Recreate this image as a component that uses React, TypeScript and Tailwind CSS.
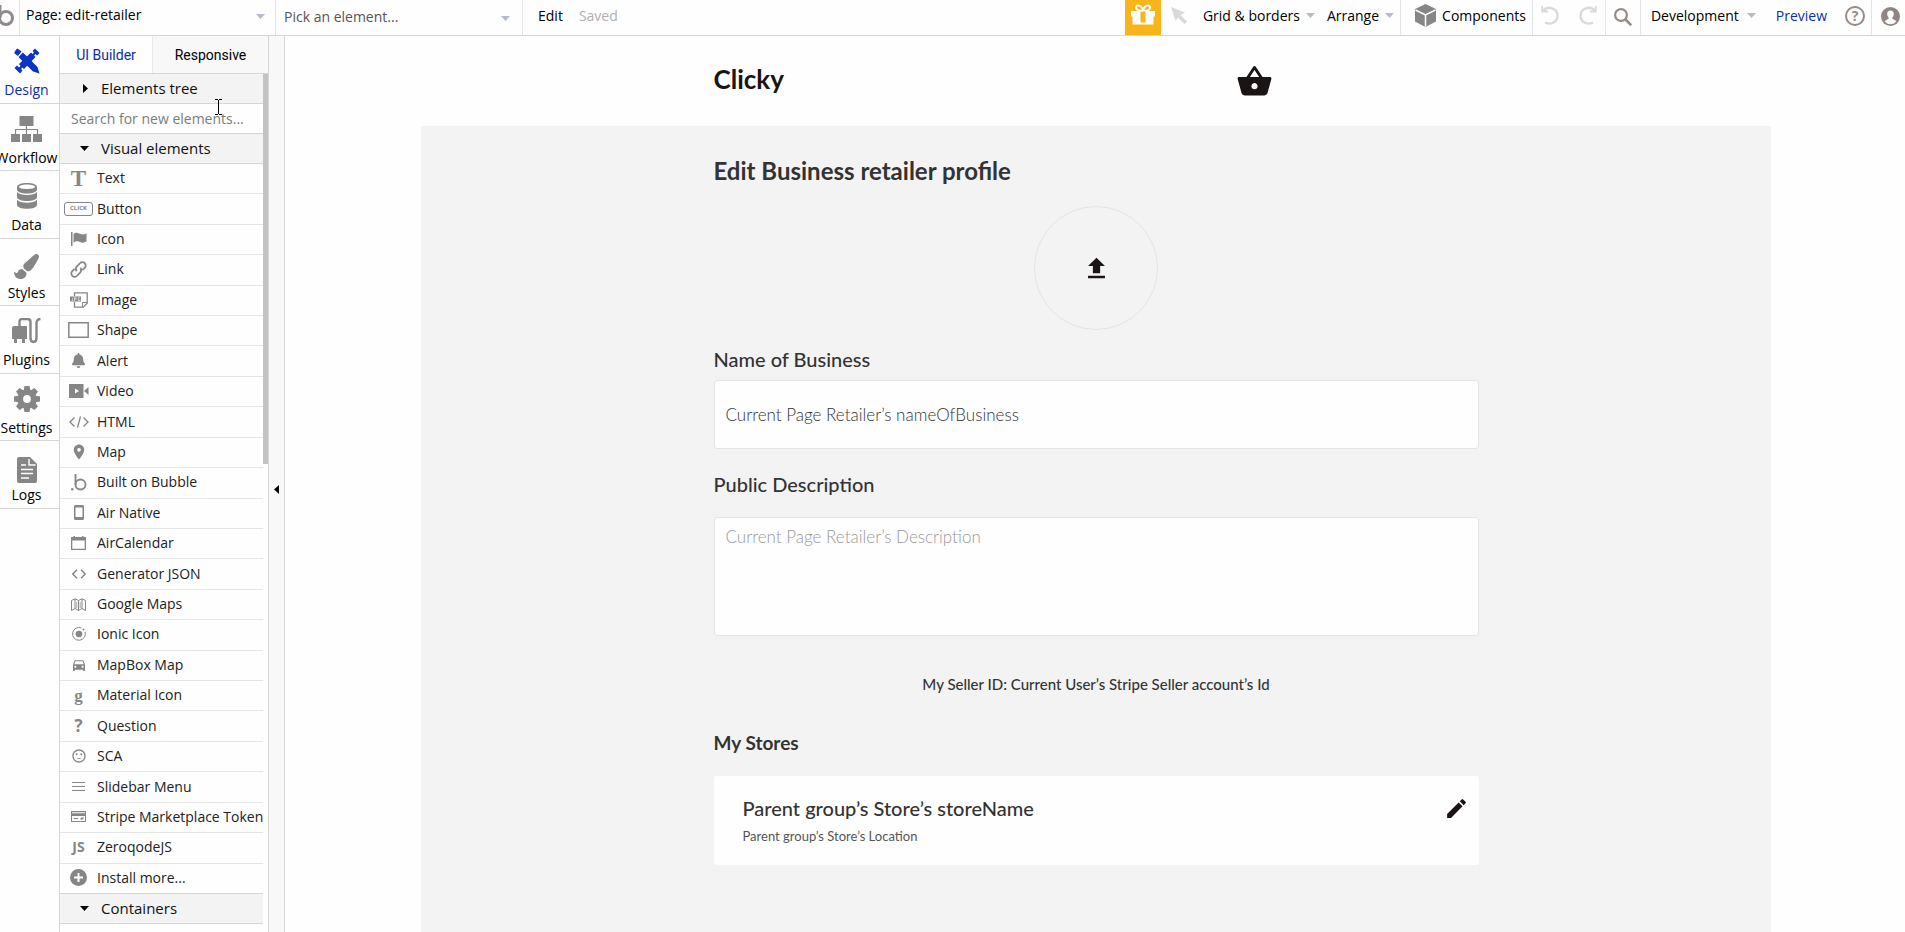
import type { ReactNode } from "react";
import { FaBell, FaPaintBrush } from "react-icons/fa";
import {
  MdDirectionsCar,
  MdEdit,
  MdFileUpload,
  MdPlace,
  MdSentimentDissatisfied,
  MdShoppingBasket
} from "react-icons/md";

interface Entry {
  label: string;
  icon: ReactNode;
}

function Caret() {
  return (
    <svg width="9" height="5" viewBox="0 0 9 5" className="shrink-0 text-[#b4bccb]" aria-hidden="true">
      <path d="M0 0h9L4.500 5z" fill="currentColor" />
    </svg>
  );
}

function DesignIcon() {
  return (
    <svg width="26" height="26" viewBox="0 0 26 26" fill="currentColor" aria-hidden="true">
      <path d="M3.500 .5 7.500 3.500 4 8 .5 5.500C0 4.500 2.500.5 3.500.5zM9 4.500 23.500 19 25.500 25.500 19 23.500 4.500 9z" />
      <path d="M21 .5 25.500 5 23 7.500l-1.500-1.500-1.500 1.500 1.500 1.500L10 21 8.500 19.500 7 21l1.500 1.500L6 25.500.5 20l2.500-2.500L5 19.500 6.500 18 5 16 17 4.500 18.500 6 20 4.500 18.500 3z" />
    </svg>
  );
}

function WorkflowIcon() {
  return (
    <svg width="31" height="26" viewBox="0 0 31 26" fill="currentColor" aria-hidden="true">
      <path d="M8.500 0h14v10h-14zM0 18h9v8H0zM11 18h9v8h-9zM22 18h9v8h-9z" />
      <path d="M15.500 10v8M4.500 18v-4.500h22V18" fill="none" stroke="currentColor" strokeWidth="1.200" />
    </svg>
  );
}

function DataIcon() {
  return (
    <svg width="20" height="26" viewBox="0 0 20 26" fill="currentColor" aria-hidden="true">
      <path
        fillRule="evenodd"
        d="M10 0c5.500 0 10 1.500 10 4v2.500C20 9 15.500 10.500 10 10.500S0 9 0 6.500V4c0-2.500 4.500-4 10-4zm0 1.500c-4.500 0-8 1-8 2.300s3.500 2.300 8 2.300 8-1 8-2.300-3.500-2.300-8-2.300z"
      />
      <path d="M0 9c1.500 2 5.500 3 10 3s8.500-1 10-3v5c0 2.500-4.500 4-10 4S0 16.500 0 14z" />
      <path d="M0 16.800c1.500 2 5.500 3 10 3s8.500-1 10-3v5c0 2.500-4.500 4-10 4s-10-1.500-10-4z" />
    </svg>
  );
}

function PluginsIcon() {
  return (
    <svg width="30" height="26" viewBox="0 0 30 26" aria-hidden="true">
      <path d="M0 10q0-2 2-2h12q1 0 1 1v12H0zM2 20h3v5H2zM10 20h3v5h-3z" fill="currentColor" />
      <path
        d="M7.500 9V4q0-3 3-3h5q3 0 3 3v16q0 4 3 4t3-4V5q0-4 4-4"
        fill="none"
        stroke="currentColor"
        strokeWidth="2.400"
      />
    </svg>
  );
}

function GearIcon() {
  return (
    <svg width="26" height="26" viewBox="0 0 26 26" aria-hidden="true">
      <circle cx="13" cy="13" r="6.700" fill="none" stroke="currentColor" strokeWidth="5.600" />
      <g fill="currentColor">
        {[0, 45, 90, 135, 180, 225, 270, 315].map((angle) => (
          <path key={angle} d="M10.500 0h5l1 5h-7z" transform={`rotate(${angle} 13 13)`} />
        ))}
      </g>
    </svg>
  );
}

function LogsIcon() {
  return (
    <svg width="20" height="26" viewBox="0 0 20 26" className="mt-2" aria-hidden="true">
      <path d="M2 0h11l7 7v17q0 2-2 2H2q-2 0-2-2V2q0-2 2-2z" fill="currentColor" />
      <path d="M12 2v6h6.500M4 8h5M4 12.500h12M4 16.500h12M4 21h8" fill="none" stroke="#fefefe" strokeWidth="1.400" />
    </svg>
  );
}

function GiftIcon() {
  return (
    <svg width="24" height="22" viewBox="0 0 24 22" aria-hidden="true">
      <path d="M0 7h24v5.500h-1.500V20.500H1.500v-8H0z" fill="#fefefe" />
      <path d="M12 7C8 7.500 4.500 5.500 5 3c.5-2.500 5.500-2.500 7 4 1.500-6.500 6.500-6.500 7-4 .5 2.500-3 4.500-7 4z" fill="none" stroke="#fefefe" strokeWidth="2" />
      <path d="M9.500 7.500h5V18.500h-5z" fill="#f8b51a" />
    </svg>
  );
}

function CubeIcon() {
  return (
    <svg width="21" height="23" viewBox="0 0 21 23" aria-hidden="true">
      <path d="M10.500 0 21 5v12.500L10.500 23 0 17.500V5z" fill="#868686" />
      <path d="M.5 6 10.500 11l10-5M10.500 11v11.500" fill="none" stroke="#fefefe" strokeWidth="1.500" />
    </svg>
  );
}

function UndoIcon() {
  return (
    <svg width="18" height="19" viewBox="0 0 18 19" fill="none" stroke="#d9d9d9" strokeWidth="2.400" aria-hidden="true">
      <path d="M2 4.500C8-1 16.500 3 16.500 9.500S10 19.500 4 16.500" />
      <path d="M1.200 0v5.500H7" strokeWidth="1.800" />
    </svg>
  );
}

function RedoIcon() {
  return (
    <svg width="18" height="19" viewBox="0 0 18 19" fill="none" stroke="#d9d9d9" strokeWidth="2.400" aria-hidden="true">
      <path d="M16 4.500C10-1 1.500 3 1.500 9.500S8 19.500 14 16.500" />
      <path d="M16.800 0v5.500H11" strokeWidth="1.800" />
    </svg>
  );
}

function SearchIcon() {
  return (
    <svg width="18" height="18" viewBox="0 0 18 18" fill="none" stroke="#958b87" aria-hidden="true">
      <circle cx="7" cy="7" r="5.900" strokeWidth="2.200" />
      <path d="m11 11 6.200 6.200" strokeWidth="2.600" />
    </svg>
  );
}

function UserIcon() {
  return (
    <svg width="19" height="19" viewBox="0 0 19 19" aria-hidden="true">
      <circle cx="9.500" cy="9.500" r="9.500" fill="#8f8683" />
      <path d="M9.500 3.500c2.200 0 3.300 1.500 3.300 3.500 0 1.500-.6 2.600-1.400 3.300v1.500l4 2.200c-1 2-3.500 3.300-5.900 3.300s-4.900-1.300-5.900-3.300l4-2.200v-1.500C6.800 9.600 6.200 8.500 6.200 7c0-2 1.100-3.500 3.300-3.500z" fill="#fefefe" />
    </svg>
  );
}

const nav: Entry[] = [
  { label: "Design", icon: <DesignIcon /> },
  { label: "Workflow", icon: <WorkflowIcon /> },
  { label: "Data", icon: <DataIcon /> },
  { label: "Styles", icon: <FaPaintBrush size={25} className="mt-1" /> },
  { label: "Plugins", icon: <PluginsIcon /> },
  { label: "Settings", icon: <GearIcon /> },
  { label: "Logs", icon: <LogsIcon /> }
];

const visualElements: Entry[] = [
  {
    label: "Text",
    icon: <span className="font-['Liberation_Serif',serif] text-[23px] leading-none font-bold">T</span>
  },
  {
    label: "Button",
    icon: (
      <span className="flex h-3.5 w-[29px] items-center justify-center rounded-[3px] border border-[#868686] text-[6px] font-bold">
        CLICK
      </span>
    )
  },
  {
    label: "Icon",
    icon: (
      <svg width="16" height="14" viewBox="0 0 16 14" fill="currentColor">
        <path d="M0 0h1.500v14H0zM2.500 2C5-.5 7.500 1 9.500 2c2 .8 4 .5 6-.8v8.300c-2 1.300-4.500 1.500-6.500.5s-4-1-6.500.7z" />
      </svg>
    )
  },
  {
    label: "Link",
    icon: (
      <svg width="17" height="17" viewBox="0 0 24 24" fill="none" stroke="currentColor" strokeWidth="2.500">
        <path d="M9.500 14.500a5 5 0 0 1 0-6.500l4.500-4.800a4.700 4.700 0 0 1 6.800 6.600L17.500 13" />
        <path d="M14.500 9.500a5 5 0 0 1 0 6.500L10 20.800a4.700 4.700 0 0 1-6.800-6.600L6.500 11" />
      </svg>
    )
  },
  {
    label: "Image",
    icon: (
      <svg width="18" height="16" viewBox="0 0 18 16" fill="none" stroke="currentColor">
        <path d="M4.500 4V.8h12.700v10.400l-4 4H4.500V10" strokeWidth="1.300" />
        <path d="M12.500 15v-4.500H17" />
        <path d="M0 4.500h11v5H0z" fill="currentColor" stroke="none" />
        <path d="M1.500 8.500h1.200V5.500M4.500 9V5.700h1.700v1.500H4.500M10 5.800H8.300v2.700H10V7.300" stroke="#fefefe" strokeWidth=".6" />
      </svg>
    )
  },
  {
    label: "Shape",
    icon: (
      <svg width="21" height="16" viewBox="0 0 21 16" fill="none" stroke="currentColor" strokeWidth="1.500">
        <path d="M.8.8h19.400v14.400H.8z" />
      </svg>
    )
  },
  { label: "Alert", icon: <FaBell size={15} /> },
  {
    label: "Video",
    icon: (
      <svg width="20" height="14" viewBox="0 0 20 14" fill="currentColor">
        <path fillRule="evenodd" d="M0 0h14.500v14H0zM6 4.500v5L10 7zM15 7l4.500-4v8z" />
      </svg>
    )
  },
  {
    label: "HTML",
    icon: (
      <svg width="20" height="12" viewBox="0 0 20 12" fill="none" stroke="currentColor" strokeWidth="1.300">
        <path d="M5.500 1.500 1 6l4.500 4.500M14.500 1.500 19 6l-4.500 4.500M11.500.5l-3 11" />
      </svg>
    )
  },
  { label: "Map", icon: <MdPlace size={18} /> },
  {
    label: "Built on Bubble",
    icon: (
      <svg width="16" height="17" viewBox="0 0 16 17" fill="none" stroke="currentColor" strokeWidth="1.800">
        <circle cx="9.500" cy="10.500" r="5" />
        <path d="M4.500 0v11" />
        <circle cx="1.200" cy="15.200" r="1.200" fill="currentColor" stroke="none" />
      </svg>
    )
  },
  {
    label: "Air Native",
    icon: (
      <svg width="10" height="15" viewBox="0 0 10 15" fill="currentColor">
        <path fillRule="evenodd" d="M1.500 0h7Q10 0 10 1.500v12Q10 15 8.500 15h-7Q0 15 0 13.500v-12Q0 0 1.500 0zm0 2.500v9.500h7V2.500z" />
      </svg>
    )
  },
  {
    label: "AirCalendar",
    icon: (
      <svg width="15" height="14" viewBox="0 0 15 14" fill="currentColor">
        <path fillRule="evenodd" d="M0 1h2.500V0H4v1h7V0h1.500v1H15v13H0zm1.300 3.500v8.200h12.400V4.500z" />
      </svg>
    )
  },
  {
    label: "Generator JSON",
    icon: (
      <svg width="14" height="10" viewBox="0 0 14 10" fill="none" stroke="currentColor" strokeWidth="1.500">
        <path d="M5 .8.8 5 5 9.200M9 .8 13.200 5 9 9.200" />
      </svg>
    )
  },
  {
    label: "Google Maps",
    icon: (
      <svg width="15" height="13" viewBox="0 0 15 13" fill="none" stroke="currentColor">
        <path d="M.5 2.500 4 .8l3.500 1.700L11 .8l3.500 1.700v10L11 10.500l-3.500 2L4 10.500l-3.500 2zM4 1v9.500M7.500 2.500v10M11 1v9.500" />
        <path d="M5.800 4v6M9.200 4v6" strokeWidth=".7" />
      </svg>
    )
  },
  {
    label: "Ionic Icon",
    icon: (
      <svg width="14" height="14" viewBox="0 0 14 14" fill="none" stroke="currentColor">
        <path d="M9.500 1A6.400 6.400 0 1 0 13 4.800" />
        <circle cx="7" cy="7" r="3.300" fill="currentColor" stroke="none" />
        <circle cx="11.500" cy="2.500" r="1" fill="currentColor" stroke="none" />
      </svg>
    )
  },
  { label: "MapBox Map", icon: <MdDirectionsCar size={16} /> },
  {
    label: "Material Icon",
    icon: <span className="font-['Liberation_Serif',serif] text-[17px] leading-none font-bold">g</span>
  },
  { label: "Question", icon: <span className="text-[17px] leading-none font-bold">?</span> },
  { label: "SCA", icon: <MdSentimentDissatisfied size={16} /> },
  {
    label: "Slidebar Menu",
    icon: (
      <svg width="13" height="9" viewBox="0 0 13 9" fill="currentColor">
        <path d="M0 0h13v1H0zM0 4h13v1H0zM0 8h13v1H0z" />
      </svg>
    )
  },
  {
    label: "Stripe Marketplace Token",
    icon: (
      <svg width="15" height="11" viewBox="0 0 15 11" fill="currentColor">
        <path fillRule="evenodd" d="M0 0h15v11H0zm1 1.200v1h13v-1zM1 5v5h13V5zM2.500 7H7v1H2.500zM9 8.500l1-2h3l-1 2z" />
      </svg>
    )
  },
  { label: "ZeroqodeJS", icon: <span className="text-sm leading-none font-bold">JS</span> },
  {
    label: "Install more...",
    icon: (
      <svg width="17" height="17" viewBox="0 0 17 17">
        <circle cx="8.500" cy="8.500" r="8.500" fill="currentColor" />
        <path d="M8.500 4v9M4 8.500h9" stroke="#fefefe" strokeWidth="2" />
      </svg>
    )
  }
];

function TopBar() {
  return (
    <header className="flex h-9 shrink-0 items-stretch border-b border-[#d6d6d6] pb-1 text-sm">
      <a href="#home" aria-label="Home" className="-mb-1 w-5 shrink-0 overflow-hidden border-r border-[#e4e4e8]">
        <svg width="15" height="35" viewBox="0 0 15 35" fill="none" stroke="#8f8b8a" strokeWidth="3">
          <circle cx="6" cy="18" r="6.500" />
          <path d="M0 5v13" />
        </svg>
      </a>
      <div className="relative -mb-1 w-64 shrink-0 border-r border-[#e4e4e8]">
        <select aria-label="Page" className="h-[30px] w-full appearance-none px-1.5 text-black outline-none">
          <option>Page: edit-retailer</option>
        </select>
        <span className="pointer-events-none absolute top-3.5 right-2.5 flex">
          <Caret />
        </span>
      </div>
      <div className="relative -mb-1 w-[247px] shrink-0 border-r border-[#e4e4e8]">
        <select aria-label="Element" className="h-[34px] w-full appearance-none px-2 text-[#555] outline-none">
          <option>Pick an element...</option>
        </select>
        <span className="pointer-events-none absolute top-4 right-3 flex">
          <Caret />
        </span>
      </div>
      <div className="flex items-center gap-4 pl-[15px]">
        <button>Edit</button>
        <span className="text-[#b0b0b0]">Saved</span>
      </div>

      <div className="-mb-1 ml-auto flex items-stretch pb-1">
        <button aria-label="Gift" className="-mb-1 flex w-9 justify-center bg-[#f8b51a] pt-1">
          <GiftIcon />
        </button>
        <button aria-label="Select" className="flex w-[42px] items-center pl-2.5">
          <svg width="16" height="17" viewBox="0 0 16 17" fill="#d9d9d9">
            <path d="M0 0 14 5.500 9.500 8 16 14.500 13.500 17 7 10.500 4.500 14z" />
          </svg>
        </button>
        <button className="flex items-center gap-1.5">
          Grid &amp; borders <Caret />
        </button>
        <button className="flex items-center gap-1.5 pr-1.5 pl-3">
          Arrange <Caret />
        </button>
        <button className="-mb-1 flex items-center gap-1.5 border-l border-[#e1e4ea] pr-1.5 pb-1 pl-3.5">
          <CubeIcon /> Components
        </button>
        <div className="-mb-1 flex items-center gap-5 border-l border-[#e1e4ea] px-2 pb-1">
          <button aria-label="Undo">
            <UndoIcon />
          </button>
          <button aria-label="Redo">
            <RedoIcon />
          </button>
        </div>
        <button aria-label="Search" className="-mb-1 flex w-9 items-center justify-center border-x border-[#e1e4ea] pb-0.5">
          <SearchIcon />
        </button>
        <button className="flex items-center gap-2 pr-5 pl-2.5">
          Development <Caret />
        </button>
        <a href="#preview" className="flex items-center text-[#0a2fa8]">
          Preview
        </a>
        <button aria-label="Help" className="flex items-center pr-1.5 pl-[18px]">
          <span className="flex size-5 items-center justify-center rounded-full border-2 border-[#958b87] text-sm leading-none font-bold text-[#958b87]">
            ?
          </span>
        </button>
        <button aria-label="Account" className="-mb-1 flex items-center border-l border-[#e1e4ea] pr-[5px] pb-0.5 pl-[9px]">
          <UserIcon />
        </button>
      </div>
    </header>
  );
}

function NavRail() {
  return (
    <nav className="w-[60px] shrink-0 overflow-hidden border-r border-[#d6d6d6]">
      {nav.map((item) => (
        <a
          key={item.label}
          href={`#${item.label.toLowerCase()}`}
          className="flex flex-col items-center border-b border-[#d6d6d6] pt-3 pr-1.5 text-[#868686] odd:h-[68px] even:h-[67px] first:text-[#0a35c4]"
        >
          <span className="flex h-[26px] items-center">{item.icon}</span>
          <span
            className={
              item.label === "Design"
                ? "mt-1.5 text-sm leading-5 text-[#0a2fa8]"
                : "mt-1.5 text-sm leading-5 text-black"
            }
          >
            {item.label}
          </span>
        </a>
      ))}
    </nav>
  );
}

function SectionHeader({ label, open }: { label: string; open: boolean }) {
  return (
    <button
      aria-expanded={open}
      className="flex h-[30px] w-full shrink-0 items-center border-b border-[#d6d6d6] bg-[#f3f3f3] pl-5 text-[15px] text-[#111]"
    >
      <svg width="9" height="9" viewBox="0 0 9 9" className="mr-3">
        {open ? <path d="M0 2h9L4.500 7z" /> : <path d="M3 0v9l5-4.500z" />}
      </svg>
      {label}
    </button>
  );
}

function ElementsPanel() {
  return (
    <aside className="relative flex w-[209px] shrink-0 flex-col overflow-hidden border-r border-[#d6d6d6]">
      <div role="tablist" className="flex h-[38px] shrink-0 border-b border-[#d6d6d6] font-['Roboto',sans-serif] text-sm">
        <button role="tab" aria-selected="true" className="w-[93px] border-r border-[#e9e9e9] text-[#0a2fa8]">
          UI Builder
        </button>
        <button role="tab" aria-selected="false" className="flex-1 bg-[#f8f8f8] text-black">
          Responsive
        </button>
      </div>
      <div className="flex flex-col pr-[5px]">
        <SectionHeader label="Elements tree" open={false} />
        <input
          type="text"
          aria-label="Search for new elements"
          placeholder="Search for new elements..."
          className="h-[30px] shrink-0 border-b border-[#d6d6d6] px-[11px] text-sm outline-none placeholder:text-[#7c7c7c]"
        />
        <SectionHeader label="Visual elements" open />
        <ul className="grid h-[730px] shrink-0 auto-rows-fr">
          {visualElements.map((element) => (
            <li key={element.label} className="border-b border-[#e6e6e6] last:border-[#d6d6d6]">
              <button className="flex h-full w-full items-center pb-px text-sm text-[#222]">
                <span className="flex w-[37px] shrink-0 justify-center text-[#868686]">{element.icon}</span>
                <span className="whitespace-nowrap">{element.label}</span>
              </button>
            </li>
          ))}
        </ul>
        <SectionHeader label="Containers" open />
      </div>
      <div className="absolute top-[38px] right-0 h-[390px] w-[5px] bg-[#c3c3c3]" />
      {/* text cursor */}
      <svg width="7" height="16" viewBox="0 0 7 16" className="absolute top-[63px] left-[155px]" stroke="#000" fill="none">
        <path d="M0 .5h3M4 .5h3M3.500 1v14M0 15.500h3M4 15.500h3" />
      </svg>
    </aside>
  );
}

function Canvas() {
  return (
    <main className="min-w-0 flex-1 overflow-hidden pl-0.5 font-['Lato',sans-serif] text-[#333]">
      <div className="mx-auto flex h-[90px] max-w-[765px] items-center justify-between pr-[206px]">
        <h1 className="pb-1 text-[26px] leading-8 font-bold text-[#1a1414]">Clicky</h1>
        <button aria-label="Basket" className="text-[#1a1414]">
          <MdShoppingBasket size={37} />
        </button>
      </div>
      <div className="mx-auto min-h-full max-w-[1350px] bg-[#f3f3f3] pt-[30px]">
        <form className="mx-auto flex max-w-[765px] flex-col">
          <h2 className="text-2xl leading-[30px] font-bold">Edit Business retailer profile</h2>
          <button
            type="button"
            aria-label="Upload picture"
            className="mt-5 flex size-[124px] items-center justify-center self-center rounded-full border border-[#e4e4e4] text-[#1a1414]"
          >
            <MdFileUpload size={29} />
          </button>
          <label htmlFor="business" className="mt-[17px] text-xl leading-6 font-medium">
            Name of Business
          </label>
          <input
            id="business"
            type="text"
            defaultValue="Current Page Retailer’s nameOfBusiness"
            className="mt-[9px] h-[69px] rounded-[3px] border border-[#e4e4e4] bg-[#fefefe] px-[11px] text-[17px] font-light text-[#333] outline-none"
          />
          <label htmlFor="description" className="mt-[23px] text-xl leading-6 font-medium">
            Public Description
          </label>
          <textarea
            id="description"
            placeholder="Current Page Retailer’s Description"
            className="mt-[21px] h-[119px] resize-none rounded-[3px] border border-[#e4e4e4] bg-[#fefefe] px-[11px] py-[7px] text-[17px] leading-6 font-light outline-none placeholder:text-[#999]"
          />
          <p className="mt-[38px] text-center text-[15px] leading-5 font-medium">
            My Seller ID: Current User’s Stripe Seller account’s Id
          </p>
          <h3 className="mt-[37px] text-[19px] leading-6 font-bold">My Stores</h3>
          <article className="mt-[21px] flex h-[89px] items-start justify-between rounded-[3px] bg-[#fefefe] pt-5 pr-2.5 pl-[29px]">
            <div>
              <h4 className="text-xl leading-6 font-medium">Parent group’s Store’s storeName</h4>
              <p className="mt-1.5 text-[13px] leading-5 text-[#555]">Parent group’s Store’s Location</p>
            </div>
            <button type="button" aria-label="Edit store" className="text-[#1a1414]">
              <MdEdit size={25} />
            </button>
          </article>
        </form>
      </div>
    </main>
  );
}

export default function App() {
  return (
    <div className="flex h-screen flex-col overflow-hidden bg-[#fefefe] font-['Open_Sans',sans-serif] text-black">
      <TopBar />
      <div className="flex min-h-0 flex-1">
        <NavRail />
        <ElementsPanel />
        <button
          aria-label="Collapse panel"
          className="flex w-4 shrink-0 items-center justify-center border-r border-[#d6d6d6] bg-[#f8f8f8] pt-2.5"
        >
          <svg width="5" height="9" viewBox="0 0 5 9">
            <path d="M5 0v9L0 4.500z" />
          </svg>
        </button>
        <Canvas />
      </div>
    </div>
  );
}
